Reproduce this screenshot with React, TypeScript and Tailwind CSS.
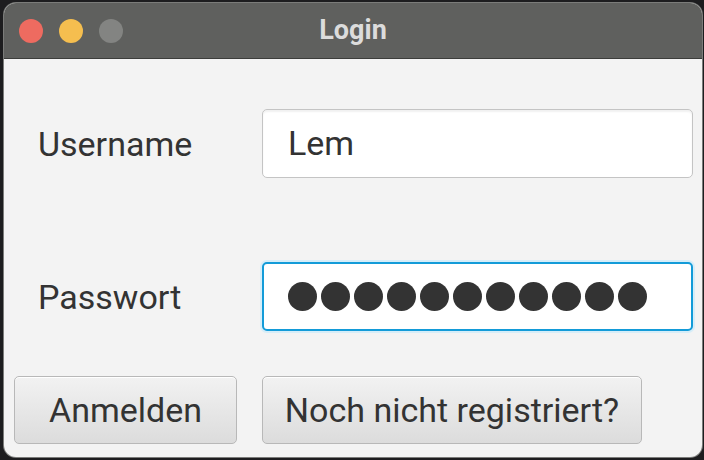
export default function App() {
  const dots = Array.from({ length: 11 })

  return (
    <div className="h-[460px] w-[704px] overflow-hidden bg-[#1d1d1f] pl-[4px] pt-[3px] font-['Roboto',sans-serif]">
      <div className="flex h-[454px] w-[698px] flex-col overflow-hidden rounded-[12px] bg-[#f3f3f3] ring-1 ring-[#7b7c7a]">
        {/* Title bar */}
        <div className="relative flex h-[56px] shrink-0 items-center border-b border-[#3c3d3b] bg-[#5f605e] pl-[15px]">
          <div className="flex gap-[16px]">
            <span className="h-[24px] w-[24px] rounded-full bg-[#ee6b60]" />
            <span className="h-[24px] w-[24px] rounded-full bg-[#f5be4f]" />
            <span className="h-[24px] w-[24px] rounded-full bg-[#838482]" />
          </div>
          <div className="absolute inset-0 flex items-center justify-center text-[27px] font-bold text-[#dcdcdc]">
            Login
          </div>
        </div>

        {/* Form */}
        <div className="flex flex-col pt-[50px]">
          <div className="flex items-center pl-[34px]">
            <label className="w-[224px] text-[34px] leading-none text-[#333]">Username</label>
            <div className="flex h-[69px] w-[431px] items-center rounded-[5px] border border-[#c4c4c4] bg-white pl-[25px] text-[34px] text-[#333] shadow-[inset_0_2px_2px_rgba(0,0,0,0.06)]">
              Lem
            </div>
          </div>

          <div className="mt-[84px] flex items-center pl-[34px]">
            <label className="w-[224px] text-[34px] leading-none text-[#333]">Passwort</label>
            <div className="flex h-[69px] w-[431px] items-center gap-[4px] rounded-[5px] border-2 border-[#139bd8] bg-white pl-[24px] shadow-[0_0_0_2px_#d6edf8]">
              {dots.map((_, i) => (
                <span key={i} className="h-[29px] w-[29px] rounded-full bg-[#333]" />
              ))}
            </div>
          </div>

          <div className="mt-[45px] flex gap-[25px] pl-[10px]">
            <button className="h-[68px] w-[223px] rounded-[5px] border border-[#b8b8b8] bg-gradient-to-b from-[#f2f2f2] to-[#dcdcdc] text-[34px] text-[#333] shadow-[inset_0_1px_0_#fff]">
              Anmelden
            </button>
            <button className="h-[68px] w-[380px] rounded-[5px] border border-[#b8b8b8] bg-gradient-to-b from-[#f2f2f2] to-[#dcdcdc] text-[34px] text-[#333] shadow-[inset_0_1px_0_#fff]">
              Noch nicht registriert?
            </button>
          </div>
        </div>
      </div>
    </div>
  )
}
